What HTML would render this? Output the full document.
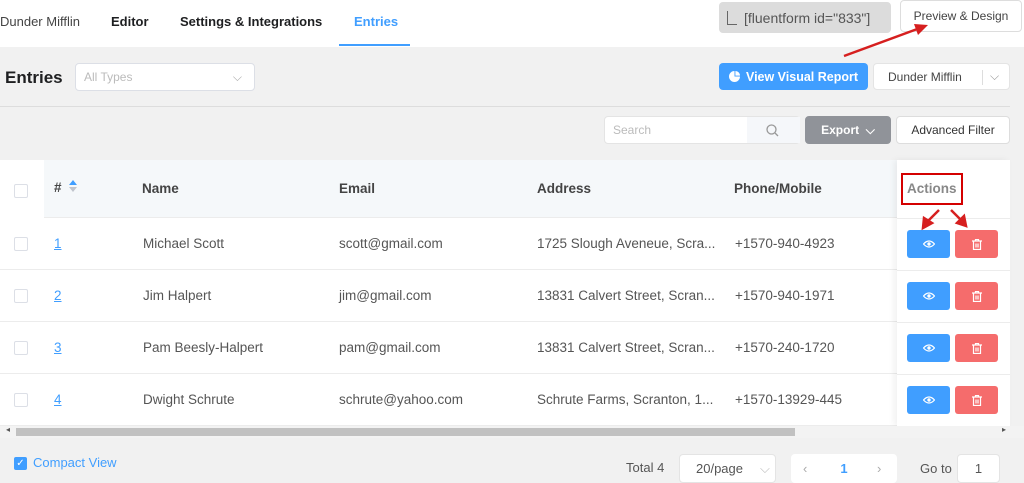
<!DOCTYPE html><html><head><style>
*{box-sizing:border-box;margin:0;padding:0}
body{width:1024px;height:483px;overflow:hidden;background:#f1f1f1;font-family:"Liberation Sans",sans-serif;position:relative;color:#1e1f21}
.a{position:absolute}
.nav{left:0;top:0;width:1024px;height:47px;background:#fff}
.t{font-size:13px;position:absolute;white-space:nowrap}
.btn{position:absolute;border-radius:4px;font-size:12px;display:flex;align-items:center;justify-content:center;white-space:nowrap}
.row{position:absolute;left:0;width:1010px;background:#fff;border-bottom:1px solid #ececec;height:52px}
.cb{position:absolute;left:14px;width:14px;height:14px;border:1px solid #dcdfe6;border-radius:2px;background:#fff}
.cell{position:absolute;font-size:13.5px;color:#555;top:18px;white-space:nowrap}
.eye{position:absolute;left:907px;width:43px;height:28px;background:#409eff;border-radius:3px;display:flex;align-items:center;justify-content:center}
.del{position:absolute;left:955px;width:43px;height:28px;background:#f56c6c;border-radius:3px;display:flex;align-items:center;justify-content:center}
</style></head><body>
<div class="a nav"></div>
<div class="t" style="left:0;top:14px;color:#444">Dunder Mifflin</div>
<div class="t" style="left:111px;top:14px;font-weight:bold">Editor</div>
<div class="t" style="left:180px;top:14px;font-weight:bold">Settings &amp; Integrations</div>
<div class="t" style="left:354px;top:14px;font-weight:bold;color:#409eff">Entries</div>
<div class="a" style="left:339px;top:44px;width:71px;height:2px;background:#409eff"></div>
<div class="btn" style="left:719px;top:2px;width:172px;height:31px;background:#dcdcdc;color:#555;font-size:14px;justify-content:flex-start;padding-left:8px"><span style="display:inline-block;width:10px;height:14px;border-left:1.5px solid #666;border-bottom:1.5px solid #666;margin-right:7px"></span>[fluentform id="833"]</div>
<div class="btn" style="left:900px;top:0;width:122px;height:32px;background:#fff;border:1px solid #ddd;color:#444">Preview &amp; Design</div>
<svg class="a" style="left:840px;top:20px" width="90" height="40"><line x1="4" y1="36" x2="80" y2="8" stroke="#d61f1f" stroke-width="2.5"/><polygon points="88,5 74,4 78,15" fill="#d61f1f"/></svg>
<div class="t" style="left:5px;top:68px;font-size:17px;font-weight:bold">Entries</div>
<div class="btn" style="left:75px;top:63px;width:180px;height:28px;background:#fff;border:1px solid #dcdfe6;color:#bbb;justify-content:space-between;padding:0 12px 0 8px">All Types<span style="color:#aaa">⌵</span></div>
<div class="btn" style="left:719px;top:63px;width:149px;height:27px;background:#409eff;color:#fff;font-weight:bold;font-size:12.5px"><svg width="11" height="11" style="margin-right:6px" viewBox="0 0 12 12"><path d="M6 0A6 6 0 1 0 12 6H6Z" fill="#fff"/><path d="M7 0A5 5 0 0 1 12 5H7Z" fill="#fff"/></svg>View Visual Report</div>
<div class="btn" style="left:873px;top:63px;width:137px;height:27px;background:#fff;border:1px solid #e4e4e4;color:#444;justify-content:flex-start;padding-left:14px">Dunder Mifflin<span style="position:absolute;left:108px;top:6px;width:1px;height:15px;background:#ddd"></span><span style="position:absolute;left:116px;color:#999">⌵</span></div>
<div class="a" style="left:0;top:106px;width:1010px;height:1px;background:#ddd"></div>
<div class="btn" style="left:604px;top:116px;width:196px;height:28px;background:#fff;border:1px solid #e4e4e4;color:#bbb;justify-content:flex-start;padding-left:8px">Search<span style="position:absolute;left:142px;top:0;width:53px;height:26px;background:#f5f7fa"></span><svg style="position:absolute;left:161px;top:7px" width="13" height="13"><circle cx="5.5" cy="5.5" r="4.5" stroke="#999" stroke-width="1.3" fill="none"/><line x1="9" y1="9" x2="12" y2="12" stroke="#999" stroke-width="1.3"/></svg></div>
<div class="btn" style="left:805px;top:116px;width:86px;height:28px;background:#909399;color:#fff;font-weight:bold">Export&nbsp;&nbsp;⌵</div>
<div class="btn" style="left:896px;top:116px;width:114px;height:28px;background:#fff;border:1px solid #ddd;color:#333">Advanced Filter</div>
<div class="row" style="top:160px;height:58px;background:#f5f8fa"></div>
<div class="a" style="left:0;top:160px;width:44px;height:58px;background:#fff"></div>
<div class="cb" style="top:184px"></div>
<div class="cell" style="left:54px;top:180px;font-weight:bold;color:#444">#</div>
<div class="a" style="left:69px;top:180px;width:0;height:0;border:4px solid transparent;border-bottom:5px solid #409eff;border-top:0"></div>
<div class="a" style="left:69px;top:187px;width:0;height:0;border:4px solid transparent;border-top:5px solid #c0c4cc;border-bottom:0"></div>
<div class="cell" style="left:142px;top:181px;font-weight:bold;color:#444">Name</div>
<div class="cell" style="left:339px;top:181px;font-weight:bold;color:#444">Email</div>
<div class="cell" style="left:537px;top:181px;font-weight:bold;color:#444">Address</div>
<div class="cell" style="left:734px;top:181px;font-weight:bold;color:#444">Phone/Mobile</div>

<div class="row" style="top:218px"></div><div class="row" style="top:270px"></div><div class="row" style="top:322px"></div><div class="row" style="top:374px"></div>
<div class="a" style="left:897px;top:160px;width:113px;height:266px;background:#fff;box-shadow:-3px 0 6px rgba(0,0,0,.06)"></div>
<div class="a" style="left:897px;top:218px;width:113px;height:1px;background:#ececec"></div>
<div class="a" style="left:897px;top:270px;width:113px;height:1px;background:#ececec"></div>
<div class="a" style="left:897px;top:322px;width:113px;height:1px;background:#ececec"></div>
<div class="a" style="left:897px;top:374px;width:113px;height:1px;background:#ececec"></div>
<div class="cell" style="left:907px;top:181px;font-weight:bold;color:#888">Actions</div>
<div class="a" style="left:901px;top:173px;width:62px;height:32px;border:2.5px solid #d40000"></div>

<div class="cb" style="top:237px"></div><div class="cell" style="left:54px;top:236px;color:#409eff;text-decoration:underline">1</div><div class="cell" style="left:143px;top:236px">Michael Scott</div><div class="cell" style="left:339px;top:236px">scott@gmail.com</div><div class="cell" style="left:537px;top:236px">1725 Slough Aveneue, Scra...</div><div class="cell" style="left:735px;top:236px">+1570-940-4923</div>
<div class="cb" style="top:289px"></div><div class="cell" style="left:54px;top:288px;color:#409eff;text-decoration:underline">2</div><div class="cell" style="left:143px;top:288px">Jim Halpert</div><div class="cell" style="left:339px;top:288px">jim@gmail.com</div><div class="cell" style="left:537px;top:288px">13831 Calvert Street, Scran...</div><div class="cell" style="left:735px;top:288px">+1570-940-1971</div>
<div class="cb" style="top:341px"></div><div class="cell" style="left:54px;top:340px;color:#409eff;text-decoration:underline">3</div><div class="cell" style="left:143px;top:340px">Pam Beesly-Halpert</div><div class="cell" style="left:339px;top:340px">pam@gmail.com</div><div class="cell" style="left:537px;top:340px">13831 Calvert Street, Scran...</div><div class="cell" style="left:735px;top:340px">+1570-240-1720</div>
<div class="cb" style="top:393px"></div><div class="cell" style="left:54px;top:392px;color:#409eff;text-decoration:underline">4</div><div class="cell" style="left:143px;top:392px">Dwight Schrute</div><div class="cell" style="left:339px;top:392px">schrute@yahoo.com</div><div class="cell" style="left:537px;top:392px">Schrute Farms, Scranton, 1...</div><div class="cell" style="left:735px;top:392px">+1570-13929-445</div>

<div class="eye" style="top:230px"><svg width="12" height="8" viewBox="0 0 12 8"><path d="M0.5 4Q6 -2 11.5 4Q6 10 0.5 4Z" fill="none" stroke="#fff" stroke-width="1.2"/><circle cx="6" cy="4" r="1.7" fill="#fff"/></svg></div><div class="del" style="top:230px"><svg width="10" height="11" viewBox="0 0 10 11"><path d="M0 2H10M3.5 2V0.5H6.5V2M1.5 2.5V10.5H8.5V2.5M4 4.5V8.5M6 4.5V8.5" fill="none" stroke="#fff" stroke-width="1.2"/></svg></div>
<div class="eye" style="top:282px"><svg width="12" height="8" viewBox="0 0 12 8"><path d="M0.5 4Q6 -2 11.5 4Q6 10 0.5 4Z" fill="none" stroke="#fff" stroke-width="1.2"/><circle cx="6" cy="4" r="1.7" fill="#fff"/></svg></div><div class="del" style="top:282px"><svg width="10" height="11" viewBox="0 0 10 11"><path d="M0 2H10M3.5 2V0.5H6.5V2M1.5 2.5V10.5H8.5V2.5M4 4.5V8.5M6 4.5V8.5" fill="none" stroke="#fff" stroke-width="1.2"/></svg></div>
<div class="eye" style="top:334px"><svg width="12" height="8" viewBox="0 0 12 8"><path d="M0.5 4Q6 -2 11.5 4Q6 10 0.5 4Z" fill="none" stroke="#fff" stroke-width="1.2"/><circle cx="6" cy="4" r="1.7" fill="#fff"/></svg></div><div class="del" style="top:334px"><svg width="10" height="11" viewBox="0 0 10 11"><path d="M0 2H10M3.5 2V0.5H6.5V2M1.5 2.5V10.5H8.5V2.5M4 4.5V8.5M6 4.5V8.5" fill="none" stroke="#fff" stroke-width="1.2"/></svg></div>
<div class="eye" style="top:386px"><svg width="12" height="8" viewBox="0 0 12 8"><path d="M0.5 4Q6 -2 11.5 4Q6 10 0.5 4Z" fill="none" stroke="#fff" stroke-width="1.2"/><circle cx="6" cy="4" r="1.7" fill="#fff"/></svg></div><div class="del" style="top:386px"><svg width="10" height="11" viewBox="0 0 10 11"><path d="M0 2H10M3.5 2V0.5H6.5V2M1.5 2.5V10.5H8.5V2.5M4 4.5V8.5M6 4.5V8.5" fill="none" stroke="#fff" stroke-width="1.2"/></svg></div>
<svg class="a" style="left:915px;top:206px" width="60" height="28"><g stroke="#d61f1f" stroke-width="2.5" fill="#d61f1f"><line x1="24" y1="4" x2="12" y2="16"/><polygon points="8,22 9,12 17,17"/><line x1="36" y1="4" x2="46" y2="14"/><polygon points="51,20 42,17 49,10"/></g></svg>
<div class="a" style="left:0;top:426px;width:1024px;height:12px;background:#f3f3f3"></div>
<div class="a" style="left:16px;top:428px;width:779px;height:8px;background:#c1c1c1"></div>
<div class="t" style="left:6px;top:425px;font-size:8px;color:#555">◂</div><div class="t" style="left:1002px;top:425px;font-size:8px;color:#555">▸</div>
<div class="a" style="left:14px;top:457px;width:13px;height:13px;background:#409eff;border-radius:2px;color:#fff;font-size:10px;text-align:center;line-height:13px">✓</div>
<div class="t" style="left:33px;top:455px;color:#409eff">Compact View</div>
<div class="t" style="left:626px;top:460px;color:#555">Total 4</div>
<div class="btn" style="left:679px;top:454px;width:97px;height:29px;background:#fff;border:1px solid #e4e4e4;color:#555;font-size:13px;justify-content:flex-start;padding-left:16px">20/page<span style="position:absolute;left:80px;color:#bbb">⌵</span></div>
<div class="btn" style="left:791px;top:454px;width:106px;height:29px;background:#fff;color:#409eff;font-weight:bold;font-size:13px"><span style="position:absolute;left:12px;color:#aaa;font-weight:normal">‹</span>1<span style="position:absolute;left:86px;color:#aaa;font-weight:normal">›</span></div>
<div class="t" style="left:920px;top:461px;color:#555">Go to</div>
<div class="btn" style="left:957px;top:454px;width:43px;height:29px;background:#fff;border:1px solid #e4e4e4;color:#555;font-size:13px">1</div>
</body></html>
